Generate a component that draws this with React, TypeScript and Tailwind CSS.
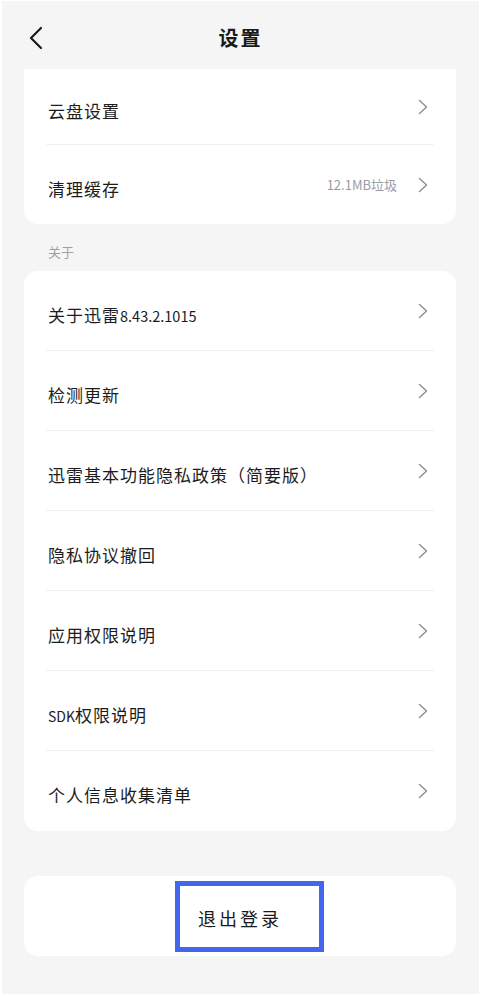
import React from "react";

const FONT = { fontFamily: '"Noto Sans CJK SC", "Noto Sans", sans-serif' };

function Chevron() {
  return (
    <svg width="10" height="16" viewBox="0 0 10 16" className="mr-[6px] shrink-0">
      <path d="M1.5 1.5 L8.5 8 L1.5 14.5" fill="none" stroke="#8a8d99" strokeWidth="1.4" strokeLinecap="round" strokeLinejoin="round" />
    </svg>
  );
}

function Row({ label, extra, h, divider }: { label: React.ReactNode; extra?: string; h: string; divider?: boolean }) {
  return (
    <div className={`mx-[22px] flex items-center justify-between ${h} ${divider ? "border-b border-[#f0f0f0]" : ""}`}>
      <span className="pt-2 pl-[2px] text-[17px] text-[#1c1c1c] tracking-[1px]">{label}</span>
      <div className="flex items-center">
        {extra && <span className="mr-[21px] text-[13px] text-[#9a9ba6]">{extra}</span>}
        <Chevron />
      </div>
    </div>
  );
}

export default function App() {
  const about: { key: string; node: React.ReactNode }[] = [
    { key: "a", node: <>关于迅雷<span className="text-[14.5px] tracking-[0px]">8.43.2.1015</span></> },
    { key: "b", node: "检测更新" },
    { key: "c", node: "迅雷基本功能隐私政策（简要版）" },
    { key: "d", node: "隐私协议撤回" },
    { key: "e", node: "应用权限说明" },
    { key: "f", node: <><span className="text-[14px] tracking-[0px]">SDK</span>权限说明</> },
    { key: "g", node: "个人信息收集清单" },
  ];
  return (
    <div style={FONT} className="min-h-[996px] w-[480px] bg-[#f5f5f5] border-l-2 border-r border-t border-b-2 border-white">
      <div className="relative flex h-[68px] items-center justify-center">
        <svg width="16" height="24" viewBox="0 0 16 24" className="absolute left-[26px] top-[25px]">
          <path d="M13 2 L3 12 L13 22" fill="none" stroke="#1a1a1a" strokeWidth="2.2" strokeLinecap="round" strokeLinejoin="round" />
        </svg>
        <span className="pt-[6px] text-[20px] font-bold text-[#1a1a1a] tracking-[2px]">设置</span>
      </div>
      <div className="ml-[22px] mr-[23px] rounded-b-[14px] bg-white">
        <Row label="云盘设置" h="h-[76px]" divider />
        <Row label="清理缓存" extra="12.1MB垃圾" h="h-[79px]" />
      </div>
      <div className="flex h-[47px] items-center pl-[46px] pt-[9px] text-[13px] text-[#a0a0a8]">关于</div>
      <div className="ml-[22px] mr-[23px] rounded-[14px] bg-white">
        {about.map((t, i) => (
          <Row key={t.key} label={t.node} h="h-[80px]" divider={i < about.length - 1} />
        ))}
      </div>
      <div className="ml-[22px] mr-[23px] mt-[45px] flex h-[80px] items-center justify-center rounded-[14px] bg-white">
        <div className="ml-[19px] flex h-[71px] w-[149px] items-center justify-center border-[5px] border-[#4466ee] pr-[19px]">
          <span className="pt-1 text-[18px] text-[#1a1a1a] tracking-[3px]">退出登录</span>
        </div>
      </div>
    </div>
  );
}
